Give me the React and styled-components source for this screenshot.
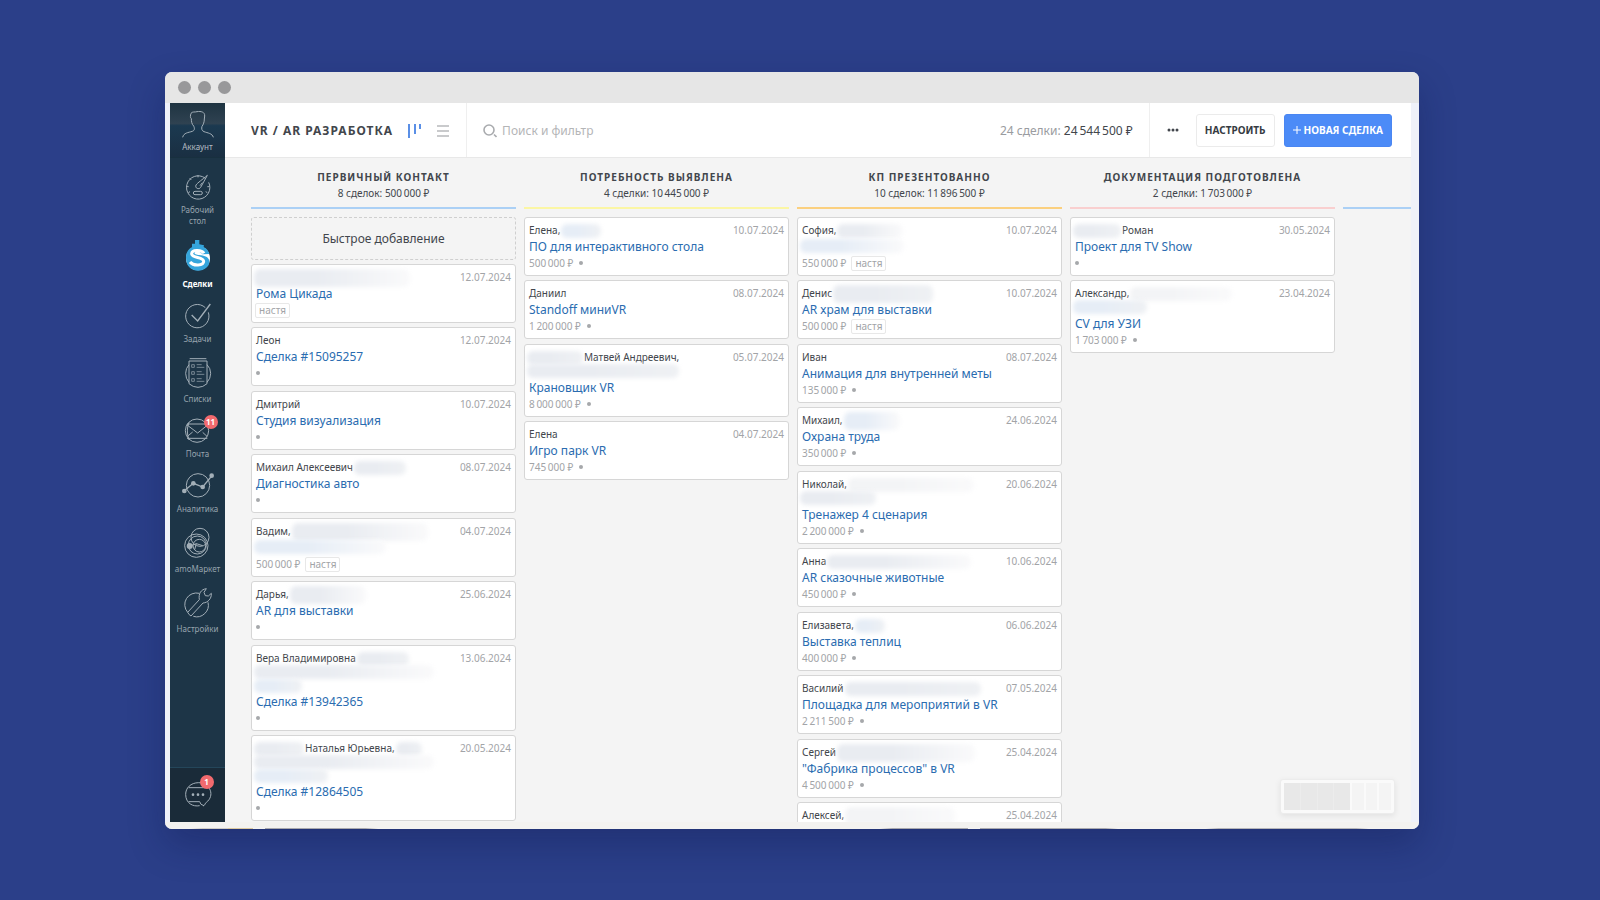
import styled, { createGlobalStyle } from "styled-components";

const columns = [
    {
        name: "Первичный контакт",
        total: "8 сделок: 500\u2009000 ₽",
        color: "#abd0f5",
        quickAdd: true,
        deals: [
            { lines: [[{ w: 156, start: true, fade: true, tall: true }]], date: "12.07.2024", title: "Рома Цикада", tag: "настя" },
            { lines: [["Леон"]], date: "12.07.2024", title: "Сделка #15095257" },
            { lines: [["Дмитрий"]], date: "10.07.2024", title: "Студия визуализация" },
            { lines: [["Михаил Алексеевич", { w: 52 }]], date: "08.07.2024", title: "Диагностика авто" },
            { lines: [["Вадим,", { w: 136, fade: true, tall: true }]], date: "04.07.2024", hiddenTitle: 132, price: "500\u2009000 ₽", tag: "настя" },
            { lines: [["Дарья,", { w: 76, fade: true, tall: true }]], date: "25.06.2024", title: "AR для выставки" },
            { lines: [["Вера Владимировна", { w: 52 }], [{ w: 180, start: true, fade: true }], [{ w: 48, start: true, blue: true }]], date: "13.06.2024", title: "Сделка #13942365" },
            { lines: [[{ w: 50, start: true }, "Наталья Юрьевна,", { w: 26 }], [{ w: 180, start: true, fade: true }], [{ w: 74, start: true, blue: true }]], date: "20.05.2024", title: "Сделка #12864505" },
        ],
    },
    {
        name: "Потребность выявлена",
        total: "4 сделки: 10\u2009445\u2009000 ₽",
        color: "#fbf6a4",
        deals: [
            { lines: [["Елена,", { w: 40, blue: true }]], date: "10.07.2024", title: "ПО для интерактивного стола", price: "500\u2009000 ₽" },
            { lines: [["Даниил"]], date: "08.07.2024", title: "Standoff миниVR", price: "1\u2009200\u2009000 ₽" },
            { lines: [[{ w: 56, start: true }, "Матвей Андреевич,"], [{ w: 152, start: true }]], date: "05.07.2024", title: "Крановщик VR", price: "8\u2009000\u2009000 ₽" },
            { lines: [["Елена"]], date: "04.07.2024", title: "Игро парк VR", price: "745\u2009000 ₽" },
        ],
    },
    {
        name: "КП презентованно",
        total: "10 сделок: 11\u2009896\u2009500 ₽",
        color: "#fbd07f",
        deals: [
            { lines: [["София,", { w: 66, fade: true }]], date: "10.07.2024", hiddenTitle: 104, price: "550\u2009000 ₽", tag: "настя" },
            { lines: [["Денис", { w: 100, tall: true }]], date: "10.07.2024", title: "AR храм для выставки", price: "500\u2009000 ₽", tag: "настя" },
            { lines: [["Иван"]], date: "08.07.2024", title: "Анимация для внутренней меты", price: "135\u2009000 ₽" },
            { lines: [["Михаил,", { w: 56, blue: true, fade: true, tall: true }]], date: "24.06.2024", title: "Охрана труда", price: "350\u2009000 ₽" },
            { lines: [["Николай,", { w: 126, faint: true, fade: true }], [{ w: 76, start: true }]], date: "20.06.2024", title: "Тренажер 4 сценария", price: "2\u2009200\u2009000 ₽" },
            { lines: [["Анна", { w: 144, fade: true }]], date: "10.06.2024", title: "AR сказочные животные", price: "450\u2009000 ₽" },
            { lines: [["Елизавета,", { w: 30, blue: true }]], date: "06.06.2024", title: "Выставка теплиц", price: "400\u2009000 ₽" },
            { lines: [["Василий", { w: 136 }]], date: "07.05.2024", title: "Площадка для мероприятий в VR", price: "2\u2009211\u2009500 ₽" },
            { lines: [["Сергей", { w: 138, fade: true, tall: true }]], date: "25.04.2024", title: "\"Фабрика процессов\" в VR", price: "4\u2009500\u2009000 ₽" },
            { lines: [["Алексей,", { w: 110, faint: true, fade: true, tall: true }]], date: "25.04.2024", title: "", price: "" },
        ],
    },
    {
        name: "Документация подготовлена",
        total: "2 сделки: 1\u2009703\u2009000 ₽",
        color: "#f9cfcf",
        deals: [
            { lines: [[{ w: 48, start: true }, "Роман"]], date: "30.05.2024", title: "Проект для TV Show" },
            { lines: [["Александр,", { w: 102, faint: true, fade: true }], [{ w: 74, start: true, blue: true }]], date: "23.04.2024", title: "CV для УЗИ", price: "1\u2009703\u2009000 ₽" },
        ],
    },
    { name: "", total: "", color: "#abd0f5", deals: [] },
];

const menu = [
    { label: "Рабочий\nстол", Icon: DashboardIcon },
    { label: "Сделки", Icon: DealsIcon, active: true },
    { label: "Задачи", Icon: TasksIcon },
    { label: "Списки", Icon: ListsIcon },
    { label: "Почта", Icon: MailIcon, badge: 11 },
    { label: "Аналитика", Icon: AnalyticsIcon },
    { label: "amoМаркет", Icon: MarketIcon },
    { label: "Настройки", Icon: SettingsIcon },
];

export default function App() {
    return (
        <>
            <GlobalStyle />
            <Desktop>
                <Window>
                    <TitleBar>
                        <Light />
                        <Light />
                        <Light />
                    </TitleBar>
                    <Body>
                        <Sidebar />
                        <Main>
                            <TopBar />
                            <Board>
                                {columns.map((column, i) => <Column key={i} {...column} />)}
                            </Board>
                            <MiniMap>
                                <MiniView>
                                    <i /><i /><i /><i />
                                </MiniView>
                                <MiniCell />
                                <MiniCell />
                                <MiniCell />
                            </MiniMap>
                        </Main>
                    </Body>
                    <BottomEdge />
                </Window>
            </Desktop>
        </>
    );
}

function Sidebar() {
    return (
        <Nav>
            <Account href="#">
                <AccountIcon />
                Аккаунт
            </Account>
            <Menu>
                {menu.map(({ label, Icon, active, badge }) => (
                    <li key={label}>
                        <MenuLink href="#" $active={active}>
                            <IconBox>
                                <Icon />
                                {badge && <Badge>{badge}</Badge>}
                            </IconBox>
                            {label}
                        </MenuLink>
                    </li>
                ))}
            </Menu>
            <Chat aria-label="Чат">
                <IconBox>
                    <ChatIcon />
                    <Badge $low>1</Badge>
                </IconBox>
            </Chat>
        </Nav>
    );
}

function TopBar() {
    return (
        <Header>
            <Pipeline>
                <h1>VR / AR разработка</h1>
                <ViewButton aria-label="Воронка">
                    <svg width="14" height="14" viewBox="0 0 14 14" fill="#5a8fe6">
                        <rect x="0" y="0" width="2" height="14" />
                        <rect x="6" y="0" width="2" height="10" />
                        <rect x="11" y="0" width="2" height="5" />
                    </svg>
                </ViewButton>
                <ViewButton aria-label="Список">
                    <svg width="12" height="14" viewBox="0 0 12 14" fill="#c9cacc">
                        <rect y="1" width="12" height="2" />
                        <rect y="6" width="12" height="2" />
                        <rect y="11" width="12" height="2" />
                    </svg>
                </ViewButton>
            </Pipeline>
            <Search>
                <svg width="14" height="14" viewBox="0 0 14 14" fill="none" stroke="#a9abae" strokeWidth="1.6">
                    <circle cx="6" cy="6" r="5" />
                    <path d="M11 10.5L13.5 13" />
                </svg>
                <input type="text" placeholder="Поиск и фильтр" aria-label="Поиск и фильтр" />
            </Search>
            <Summary>
                24 сделки: <b>24&#8201;544&#8201;500 ₽</b>
            </Summary>
            <Actions>
                <More aria-label="Ещё">
                    <svg width="12" height="4" viewBox="0 0 12 4" fill="#42464c">
                        <circle cx="2" cy="2" r="1.5" />
                        <circle cx="6" cy="2" r="1.5" />
                        <circle cx="10" cy="2" r="1.5" />
                    </svg>
                </More>
                <Button>Настроить</Button>
                <Button $primary>
                    <svg width="8" height="8" viewBox="0 0 8 8" stroke="#fff">
                        <path d="M4 0V8M0 4H8" />
                    </svg>
                    Новая сделка
                </Button>
            </Actions>
        </Header>
    );
}

function Column({ name, total, color, quickAdd, deals }) {
    return (
        <Stage>
            <StageHead $color={color}>
                <h2>{name}</h2>
                <p>{total}</p>
            </StageHead>
            {quickAdd && <QuickAdd>Быстрое добавление</QuickAdd>}
            <Deals>
                {deals.map((deal, i) => <Deal key={i} {...deal} />)}
            </Deals>
        </Stage>
    );
}

function Deal({ lines, date, title, hiddenTitle, price, tag }) {
    return (
        <Card>
            <CardTop>
                <div>
                    {lines.map((parts, i) => (
                        <ContactLine key={i}>
                            {parts.map((part, j) => typeof part === "string"
                                ? <span key={j}>{part}</span>
                                : <Smudge key={j} $w={part.w} $start={part.start} $fade={part.fade} $faint={part.faint} $tall={part.tall} $blue={part.blue} />
                            )}
                        </ContactLine>
                    ))}
                </div>
                <time>{date}</time>
            </CardTop>
            <DealTitle>
                {hiddenTitle ? <Smudge $w={hiddenTitle} $start $blue $fade /> : <a href="#">{title}</a>}
            </DealTitle>
            <Meta>
                {price}
                {tag ? <Tag>{tag}</Tag> : <Dot />}
            </Meta>
        </Card>
    );
}

function AccountIcon() {
    return (
        <Line width="32" height="27" viewBox="65 137 96 81">
            <path d="M67 216C70 202 84 202 96 198C104 195 103 188 100 182C94 176 93 168 93 160C89 158 90 150 92 144C96 138 104 141 110 139C122 137 134 140 133 152L132 161C132 170 129 178 125 183C123 190 124 196 131 199C142 203 156 204 159 216" />
        </Line>
    );
}

function DashboardIcon() {
    return (
        <Line width="32" height="25" viewBox="65 43 96 75">
            <path d="M134 55A35 35 0 1 0 145 68" />
            <path d="M141 47L121 83C116 91 103 86 107 76C112 69 126 60 141 47ZM119 78L126 69" />
            <rect x="99" y="95" width="27" height="10" rx="5" />
            <path d="M113 46V53M88 56L93 61M78 81H85M147 81H141M84 99L89 96M141 99L136 96" />
        </Line>
    );
}

function DealsIcon() {
    return (
        <svg width="32" height="31" viewBox="65 243 96 93">
            <circle cx="113" cy="298" r="36" fill="#fff" />
            <path d="M104 243H117V256L131 259L128 273H95V254H104Z" fill="#35a5dc" />
            <path d="M147 285C143 268 128 261 112 261C90 261 77 275 77 296C77 320 92 335 113 335C133 335 146 323 147 310C148 296 136 291 122 289C109 287 101 286 103 281C106 276 120 276 126 286Z" fill="#35a5dc" />
            <path d="M131 283C125 273 95 270 94 284C93 298 130 293 130 307C130 321 99 322 89 309" fill="none" stroke="#fff" strokeWidth="9" />
        </svg>
    );
}

function TasksIcon() {
    return (
        <Line width="32" height="25" viewBox="65 428 96 75">
            <path d="M135 442A35 35 0 1 0 144 456" />
            <path d="M94 464L112 482L150 431" strokeWidth="4" />
        </Line>
    );
}

function ListsIcon() {
    return (
        <Line width="32" height="30" viewBox="65 595 96 90">
            <path d="M88 597H138M86 604H140V672Q128 683 113 683Q98 683 86 672Z" />
            <path d="M86 615Q76 626 76 641Q76 657 86 668M140 615Q151 626 151 641Q151 657 140 668" />
            <path d="M94 615H102V623H94ZM94 636H102V644H94ZM94 657H102V665H94ZM109 615H124M109 623H132M109 636H124M109 644H132M109 657H124M109 665H132" strokeWidth="2" />
        </Line>
    );
}

function MailIcon() {
    return (
        <Line width="32" height="25" viewBox="65 54 96 75">
            <circle cx="110" cy="92" r="35" />
            <path d="M80 72H141M80 115H141M79 74L112 99L143 74M80 110L97 96M141 110L127 97" />
            <path d="M86 67Q76 92 86 120" />
        </Line>
    );
}

function AnalyticsIcon() {
    return (
        <Line width="32" height="25" viewBox="65 222 96 75">
            <circle cx="113" cy="259" r="35" />
            <path d="M71 276L99 253L127 264L155 230" strokeWidth="4" />
            <g fill="#a3afb8" stroke="none">
                <circle cx="72" cy="276" r="7" />
                <circle cx="99" cy="253" r="7" />
                <circle cx="127" cy="264" r="7" />
                <circle cx="154" cy="230" r="7" />
            </g>
        </Line>
    );
}

function MarketIcon() {
    return (
        <Line width="32" height="30" viewBox="65 387 96 90">
            <circle cx="119" cy="415" r="27" />
            <circle cx="108" cy="440" r="35" />
            <circle cx="111" cy="438" r="27" />
            <circle cx="117" cy="440" r="19" />
            <path d="M90 441L108 434L127 440M108 434L103 452" />
            <circle cx="88" cy="441" r="9" fill="#a3afb8" stroke="none" />
        </Line>
    );
}

function SettingsIcon() {
    return (
        <Line width="32" height="30" viewBox="65 567 96 90">
            <path d="M117 583A35 35 0 0 0 82 640M99 652A35 35 0 0 0 143 610" />
            <path d="M82 640L117 602C114 584 122 571 138 569L131 580L135 590L144 591L153 583C154 599 143 611 128 612L92 651" />
            <path d="M82 640Q86 648 92 651" />
        </Line>
    );
}

function ChatIcon() {
    return (
        <Line width="32" height="25" viewBox="65 94 96 75">
            <path d="M128 166C135 164 134 157 138 155C164 136 151 97 115 96C91 96 76 112 76 131C76 158 98 169 118 165" />
            <path d="M85 111H140M85 153H118L122 161L131 165" />
            <g fill="#a3afb8" stroke="none">
                <circle cx="98" cy="132" r="4" />
                <circle cx="113" cy="132" r="4" />
                <circle cx="128" cy="132" r="4" />
            </g>
        </Line>
    );
}

const GlobalStyle = createGlobalStyle`
    * {
        box-sizing: border-box;
        margin: 0;
        padding: 0;
    }
    body {
        font-family: "Noto Sans", sans-serif;
        font-size: 10px;
        color: #42464c;
    }
    button, input {
        font-family: inherit;
        border: none;
        background: none;
        color: inherit;
    }
    button {
        cursor: pointer;
    }
    a {
        text-decoration: none;
    }
    ul {
        list-style: none;
    }
`

const Desktop = styled.div`
    display: flex;
    height: 100vh;
    padding: 72px 181px 71px 165px;
    background-color: #2b3f89;
`

const Window = styled.div`
    display: flex;
    flex: 1;
    flex-direction: column;
    min-width: 0;
    border-radius: 7px;
    background-color: #eff1f9;
    box-shadow: 0 16px 36px rgba(10, 20, 70, 0.3);
    overflow: hidden;
`

const TitleBar = styled.div`
    display: flex;
    align-items: center;
    gap: 7px;
    height: 31px;
    padding-left: 13px;
    background-color: #e6e6e6;
`

const Light = styled.span`
    width: 13px;
    height: 13px;
    border-radius: 50%;
    background-color: #98989a;
`

const Body = styled.div`
    display: flex;
    flex: 1;
    min-height: 0;
    padding: 0 8px 0 5px;
`

/* tops of the next page showing along the lower border */
const BottomEdge = styled.div`
    height: 7px;
    background:
        linear-gradient(
            90deg,
            transparent 2%, #cfccc6 3% 5%, #dcc9a0 5% 7%, transparent 7% 8%,
            #a9a9ae 8% 16%, transparent 17% 57%, #a9a9ae 58% 64%, transparent 64% 65%,
            #a9a9ae 65% 75%, transparent 76% 83%, #b5b5b9 84% 95%, transparent 96%
        ) bottom / 100% 1px no-repeat,
        #f3f2f0;
`

const Nav = styled.nav`
    display: flex;
    flex-direction: column;
    width: 55px;
    flex-shrink: 0;
    background-color: #1d3547;
    color: #97a4ae;
    font-size: 8px;
    line-height: 11px;
    text-align: center;
`

const Line = styled.svg.attrs({ fill: "none", stroke: "#a3afb8", strokeWidth: 3 })`
    display: block;
    overflow: visible;
`

const Account = styled.a`
    display: flex;
    flex-direction: column;
    align-items: center;
    gap: 3px;
    height: 55px;
    padding-top: 8px;
    border-bottom: 1px solid #18303f;
    background: linear-gradient(#1f3442, #2f4251 38%, #1b3950 42%, #1a2f42);
    color: #b4bdc4;
`

const Menu = styled.ul`
    display: flex;
    flex: 1;
    flex-direction: column;
    gap: 14px;
    padding-top: 16px;
`

const MenuLink = styled.a`
    display: flex;
    flex-direction: column;
    align-items: center;
    gap: 5px;
    color: ${({ $active }) => $active ? "#ffffff" : "#97a4ae"};
    font-weight: ${({ $active }) => $active ? 700 : 400};
    white-space: pre-line;
`

const IconBox = styled.span`
    position: relative;
`

const Badge = styled.span`
    position: absolute;
    top: ${({ $low }) => $low ? "-7px" : "-3px"};
    right: ${({ $low }) => $low ? "0" : "-4px"};
    min-width: 14px;
    height: 14px;
    border-radius: 7px;
    background-color: #f26a6e;
    color: #ffffff;
    font-size: 8px;
    font-weight: 700;
    line-height: 14px;
`

const Chat = styled.button`
    display: flex;
    justify-content: center;
    height: 55px;
    padding-top: 14px;
    border-top: 1px solid #24465a;
    background-color: #1a2b39;
`

const Main = styled.main`
    position: relative;
    display: flex;
    flex: 1;
    flex-direction: column;
    min-width: 0;
    background-color: #f4f4f4;
    overflow: hidden;
`

const Header = styled.header`
    display: flex;
    flex-shrink: 0;
    height: 55px;
    border-bottom: 1px solid #e8e8e8;
    background-color: #ffffff;
`

const Pipeline = styled.div`
    display: flex;
    align-items: center;
    gap: 15px;
    padding: 1px 17px 0 26px;
    border-right: 1px solid #efefef;
    h1 {
        font-size: 12px;
        letter-spacing: 1px;
        text-transform: uppercase;
        white-space: nowrap;
    }
`

const ViewButton = styled.button`
    display: flex;
`

const Search = styled.label`
    display: flex;
    flex: 1;
    align-items: center;
    gap: 5px;
    padding: 1px 0 0 16px;
    input {
        flex: 1;
        min-width: 0;
        font-size: 12px;
        outline: none;
    }
    input::placeholder {
        color: #b4b5b7;
    }
`

const Summary = styled.p`
    align-self: center;
    padding: 1px 16px 0 0;
    color: #9a9ca0;
    font-size: 12px;
    white-space: nowrap;
    b {
        color: #42464c;
        font-weight: 400;
    }
`

const Actions = styled.div`
    display: flex;
    align-items: center;
    gap: 9px;
    padding-right: 19px;
    border-left: 1px solid #efefef;
`

const More = styled.button`
    display: flex;
    padding: 8px;
    margin-left: 9px;
`

const Button = styled.button`
    display: flex;
    align-items: center;
    gap: 3px;
    height: 33px;
    padding: 0 8px;
    border: 1px solid ${({ $primary }) => $primary ? "#4a86f2" : "#ebebeb"};
    border-radius: 3px;
    background-color: ${({ $primary }) => $primary ? "#4c8bf7" : "#ffffff"};
    color: ${({ $primary }) => $primary ? "#ffffff" : "#363b42"};
    font-size: 10px;
    font-weight: 700;
    text-transform: uppercase;
    white-space: nowrap;
`

const Board = styled.div`
    display: flex;
    flex: 1;
    gap: 8px;
    min-height: 0;
    padding-left: 26px;
    overflow: hidden;
`

const Stage = styled.section`
    width: 265px;
    flex-shrink: 0;
`

const StageHead = styled.header`
    height: 51px;
    margin-bottom: 8px;
    padding-top: 11px;
    border-bottom: 2px solid ${({ $color }) => $color};
    text-align: center;
    h2 {
        font-size: 10px;
        letter-spacing: 1px;
        line-height: 16px;
        text-transform: uppercase;
    }
    p {
        font-size: 10px;
        line-height: 16px;
    }
`

const QuickAdd = styled.button`
    width: 100%;
    height: 43px;
    margin-bottom: 4px;
    border: 1px dashed #cfcfcf;
    border-radius: 3px;
    font-size: 12px;
`

const Deals = styled.ul`
    display: flex;
    flex-direction: column;
`

const Card = styled.li`
    margin-bottom: 4px;
    padding: 6px 4px 4px;
    border: 1px solid #d6d6d6;
    border-radius: 3px;
    background-color: #ffffff;
    &:nth-child(even) {
        margin-bottom: 5px;
    }
`

const CardTop = styled.div`
    display: flex;
    justify-content: space-between;
    font-size: 10px;
    line-height: 13px;
    time {
        color: #a2a4a7;
    }
`

const ContactLine = styled.div`
    display: flex;
    align-items: center;
    gap: 1px;
    height: 13px;
    white-space: nowrap;
    &:nth-child(2) {
        height: 14px;
    }
`

const smudgeColor = ({ $blue, $faint }) => $faint ? "#f3f4f6" : $blue ? "#e6edf6" : "#e9ecf1"

const Smudge = styled.span`
    width: ${({ $w }) => $w}px;
    height: ${({ $tall }) => $tall ? 18 : 14}px;
    margin-left: ${({ $start }) => $start ? "-2px" : "0"};
    border-radius: 6px;
    background: linear-gradient(
        90deg,
        ${smudgeColor} 40%,
        ${({ $fade }) => $fade ? "#fafafb" : "#eff1f4"}
    );
    filter: blur(2px);
`

const DealTitle = styled.h3`
    display: flex;
    align-items: center;
    height: 18px;
    font-size: 12px;
    font-weight: 400;
    white-space: nowrap;
    a {
        color: #2a6cb0;
    }
`

const Meta = styled.div`
    display: flex;
    align-items: center;
    gap: 6px;
    height: 16px;
    color: #a2a4a7;
    font-size: 10px;
`

const Tag = styled.span`
    padding: 0 3px;
    border: 1px solid #e8e8e8;
    border-radius: 2px;
    line-height: 13px;
    &:first-child {
        margin-left: -1px;
    }
`

const Dot = styled.span`
    width: 4px;
    height: 4px;
    border-radius: 50%;
    background-color: #a6a8ab;
`

const MiniMap = styled.div`
    position: absolute;
    right: 16px;
    bottom: 8px;
    display: flex;
    gap: 2px;
    width: 115px;
    height: 35px;
    padding: 3px;
    border: 1px solid #ececec;
    border-radius: 3px;
    background-color: #fafafa;
    box-shadow: 0 2px 6px rgba(0, 0, 0, 0.08);
`

const MiniView = styled.div`
    display: flex;
    gap: 1px;
    width: 66px;
    background-color: #ececec;
    i {
        flex: 1;
        background-color: #e8e8e8;
    }
`

const MiniCell = styled.div`
    flex: 1;
    background-color: #f4f4f4;
`
